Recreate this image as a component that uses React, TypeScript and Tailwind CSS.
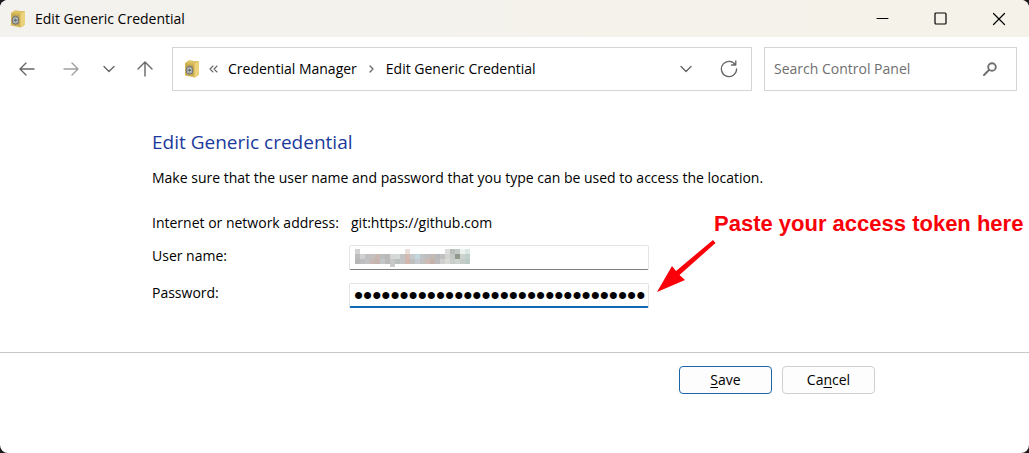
import React from "react";

const MOSAIC: string[][] = [
  ["#d2d2d2", "", "", "", "", "", "", "", "", "", "#e9e0dc", "", "", "", "", "", "", "", "#dcdcda", "#b9bdb9", "#c3cbc6", "#eef2ef", "#dbe7e4"],
  ["#bcbcbc", "#d0d0d0", "#c1c1c3", "#c4bfc0", "#c9b8b2", "#bdbdbd", "#b9b9b9", "#d4d6d8", "#d4dad8", "#c2c4c4", "#d3b9b1", "#c6c9cd", "#c4d6de", "#bfc3c5", "#bdbdbd", "#c3b9b5", "#b8b8ba", "#c0c0c0", "#d6d4d0", "#c3c9c4", "#93988c", "#ccd3cf", "#c2cfcb"],
  ["#b6b6b6", "#bdbdbf", "#c2c2c2", "#c8b8b3", "#c6b5ae", "#c3c6c9", "#bababa", "#c7c7c7", "#b9c0be", "#c4c4c4", "#d2b5ad", "#bfbfc1", "#c4cacd", "#c0c0c0", "#cdbab4", "#c4b1aa", "#bcbcbe", "#d0d0d0", "#d8dcd9", "#c9cdca", "#cdd3ce", "#c5cbc7", "#bccac5"],
  ["", "", "", "", "", "", "", "#c9cdc8", "", "", "", "", "", "", "", "", "", "", "", "", "", "", ""],
];

function SafeIcon() {
  return (
    <svg width="16" height="18" viewBox="0 0 16 18" aria-hidden="true">
      <path d="M1 3 L5 0.5 L15 1.5 L15 14.5 L11 17.5 L1 15.5 Z" fill="#d3b455" />
      <path d="M1 3 L5 0.5 L15 1.5 L10.5 3.5 Z" fill="#ddc265" />
      <path d="M10.5 3.5 L15 1.5 L15 14.5 L10.5 17.5 Z" fill="#ecd27a" />
      <path d="M2 4.5 L9.5 5 L9.5 15.5 L2 14 Z" fill="#bfa553" />
      <ellipse cx="5.5" cy="10.3" rx="3.4" ry="4" fill="#a3a79f" stroke="#6f7272" strokeWidth="1" />
      <path d="M3.5 8.5 L7.5 12 M7 8 L4 12.5" stroke="#dfe2dd" strokeWidth="1" />
      <circle cx="5.5" cy="10.3" r="1.3" fill="#58697a" />
    </svg>
  );
}

function Stroke({ d, color = "#666", size = 16, width = 1.4 }: { d: string; color?: string; size?: number; width?: number }) {
  return (
    <svg width={size} height={size} viewBox={`0 0 ${size} ${size}`} fill="none" stroke={color} strokeWidth={width} strokeLinecap="round" strokeLinejoin="round" aria-hidden="true">
      <path d={d} />
    </svg>
  );
}

const CHEVRON = "M3 5.5 L8 10.5 L13 5.5";

function TitleBar() {
  const button = "flex h-full w-[58px] items-center justify-center";
  return (
    <header className="flex h-[37px] items-center bg-linear-to-r from-[#f3f2ee] to-[#f5f2e9] pr-px pl-[10px]">
      <SafeIcon />
      <span className="ml-[9px] flex-1 text-sm">Edit Generic Credential</span>
      <button className={button} aria-label="Minimize">
        <Stroke d="M2 7.5 H13" color="#000" width={1} />
      </button>
      <button className={button} aria-label="Maximize">
        <svg width="16" height="16" viewBox="0 0 16 16" fill="none" stroke="#000" strokeWidth="1.2" aria-hidden="true">
          <rect x="2" y="2" width="11" height="11" rx="1" />
        </svg>
      </button>
      <button className={button} aria-label="Close">
        <Stroke d="M2.5 2.5 L13.5 13.5 M13.5 2.5 L2.5 13.5" color="#000" width={1.2} />
      </button>
    </header>
  );
}

function NavBar() {
  return (
    <nav className="flex h-[64px] items-center pr-3 pl-[19px]">
      <button aria-label="Back"><Stroke d="M15 8 H1 M7 2 L1 8 L7 14" /></button>
      <button aria-label="Forward" className="ml-7"><Stroke d="M1 8 H15 M9 2 L15 8 L9 14" color="#a0a0a0" /></button>
      <button aria-label="Recent locations" className="ml-[22px]"><Stroke d={CHEVRON} /></button>
      <button aria-label="Up" className="ml-5"><Stroke d="M8 15 V1 M1 8 L8 1 L15 8" /></button>
      <div className="ml-[19px] flex h-11 flex-1 items-center border border-[#d5d5d5] pr-[13px] pl-[11px]">
        <SafeIcon />
        <button aria-label="More locations" className="ml-2">
          <Stroke d="M5 3 L2 6 L5 9 M9 3 L6 6 L9 9" size={12} width={1.1} />
        </button>
        <a href="#credential-manager" className="ml-2 text-sm">Credential Manager</a>
        <span className="ml-[9px]"><Stroke d="M4 3 L7 6 L4 9" size={12} width={1.3} /></span>
        <a href="#edit" className="ml-2 text-sm">Edit Generic Credential</a>
        <button aria-label="Previous locations" className="ml-auto"><Stroke d={CHEVRON} /></button>
        <button aria-label="Refresh" className="ml-[26px]">
          <Stroke d="M15.5 5 A7.6 7.6 0 1 0 16.6 9 M15.8 1 V5 H11.5" size={18} width={1.3} />
        </button>
      </div>
      <label className="ml-3 flex h-11 w-[253px] items-center border border-[#d5d5d5] pr-[18px] pl-[9px]">
        <input type="search" aria-label="Search Control Panel" placeholder="Search Control Panel" className="min-w-0 flex-1 text-sm outline-none placeholder:text-[#6f6f6f]" />
        <svg width="16" height="16" viewBox="0 0 16 16" fill="none" stroke="#707070" strokeLinecap="round" aria-hidden="true">
          <circle cx="10" cy="6" r="3.8" strokeWidth="1.9" />
          <path d="M7 9 L2 14" strokeWidth="2" />
        </svg>
      </label>
    </nav>
  );
}

function HiddenName() {
  return (
    <svg className="pointer-events-none absolute top-1 left-[6px]" width="115" height="18" viewBox="0 0 115 18" shapeRendering="crispEdges" aria-hidden="true">
      {MOSAIC.map((row, y) =>
        row.map((fill, x) => (fill ? <rect key={`${x}-${y}`} x={x * 5} y={y * 5} width="5" height={y === 3 ? 3 : 5} fill={fill} /> : null)),
      )}
    </svg>
  );
}

export default function App() {
  return (
    <div className="min-h-screen bg-[#1c1a1c] font-['Open_Sans','Noto_Sans',sans-serif] text-black">
      <div className="flex min-h-screen flex-col overflow-hidden rounded-lg bg-white">
        <TitleBar />
        <NavBar />
        <main className="border-b border-[#c8c8c8] pt-7 pb-11 pl-[152px]">
          <h1 className="text-[19px] leading-[26px] text-[#1a3a9c]">Edit Generic credential</h1>
          <p className="mt-3 text-sm leading-[22px]">Make sure that the user name and password that you type can be used to access the location.</p>
          <form className="mt-[23px] text-sm">
            <div className="flex h-[22px] items-center">
              <span className="w-[199px]">Internet or network address:</span>
              <span>git:https://github.com</span>
            </div>
            <div className="flex">
              <label htmlFor="user" className="mt-3 w-[197px] leading-[20px]">User name:</label>
              <div className="relative mt-[11px]">
                <input id="user" type="text" className="block h-[25px] w-[300px] rounded-xs border border-[#e4e4e4] border-b-[#7f7f7f] px-[5px] outline-none" />
                <HiddenName />
              </div>
            </div>
            <div className="mt-[13px] flex">
              <label htmlFor="password" className="w-[197px] leading-[20px]">Password:</label>
              <div className="relative">
                <input id="password" type="password" defaultValue="00000000000000000000000000000000" className="block h-[25px] w-[300px] rounded-xs border border-b-2 border-[#e4e4e4] border-b-[#1368b4] pl-1 font-['Liberation_Sans',sans-serif] text-[26px] leading-[22px] outline-none" />
                <div className="absolute bottom-[14px] left-full ml-2 text-[#fa0008]">
                  <p className="ml-[57px] font-['Liberation_Sans',sans-serif] text-[22px] leading-[28px] font-bold whitespace-nowrap">Paste your access token here</p>
                  <svg width="60" height="56" viewBox="0 0 60 56" fill="currentColor" aria-hidden="true">
                    <path d="M0 54 L15 28 L19 33 L56 2 L58.5 5 L22.5 37 L28 42 Z" />
                  </svg>
                </div>
              </div>
            </div>
          </form>
        </main>
        <footer className="flex justify-end gap-[10px] pt-[13px] pr-[154px] text-sm">
          <button className="h-[28px] w-[93px] rounded border border-[#1b66a8] bg-[#fdfdfd]"><span className="underline underline-offset-2">S</span>ave</button>
          <button className="h-[28px] w-[93px] rounded border border-[#cfcfcf] bg-[#fdfdfd]">Ca<span className="underline underline-offset-2">n</span>cel</button>
        </footer>
      </div>
    </div>
  );
}
